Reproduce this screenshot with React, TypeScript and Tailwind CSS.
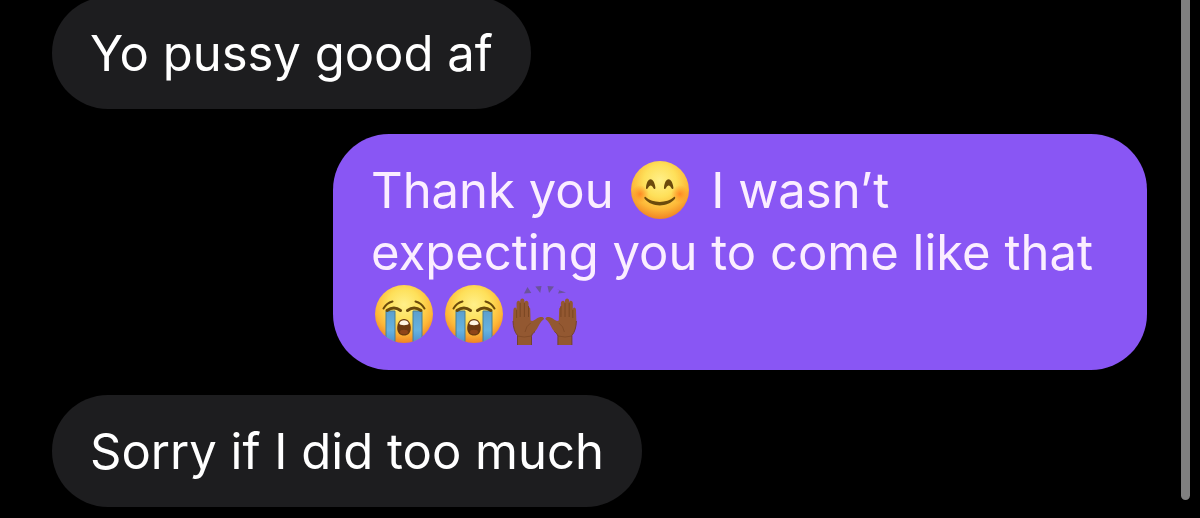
import type { ReactNode } from 'react'

const emojiClass = 'inline-block h-[62px] w-[70px] align-top'

function FaceGradient({ id }: { id: string }) {
  return (
    <defs>
      <radialGradient id={id} cx="50%" cy="34%" r="66%">
        <stop offset="0" stopColor="#fff08a" />
        <stop offset="0.42" stopColor="#fee05a" />
        <stop offset="0.75" stopColor="#fdb737" />
        <stop offset="1" stopColor="#f08423" />
      </radialGradient>
    </defs>
  )
}

function BlushEmoji() {
  return (
    <svg className={emojiClass} viewBox="0 1 70 62" role="img" aria-label="Smiling face with smiling eyes">
      <FaceGradient id="blush-face" />
      <defs>
        <radialGradient id="cheek">
          <stop offset="0" stopColor="#ff7a1c" stopOpacity="0.8" />
          <stop offset="1" stopColor="#ff8a1c" stopOpacity="0" />
        </radialGradient>
      </defs>
      <circle cx="33" cy="31" r="29" fill="url(#blush-face)" />
      <ellipse cx="13" cy="35" rx="9" ry="9" fill="url(#cheek)" />
      <ellipse cx="53" cy="35" rx="9" ry="9" fill="url(#cheek)" />
      <path d="M19 28.5C20 17.5 27 17.5 28.4 28.5C28.5 30.5 27 30.5 26.3 29C25 25.5 22.4 25.5 21 29C20.3 30.5 18.8 30.5 19 28.5Z" fill="#6b4a0c" />
      <path d="M37 28.5C38 17.5 45 17.5 46.4 28.5C46.5 30.5 45 30.5 44.3 29C43 25.5 40.4 25.5 39 29C38.3 30.5 36.8 30.5 37 28.5Z" fill="#6b4a0c" />
      <path d="M18.6 38C26 44.5 39.5 44.5 47 38C48.3 37.4 48.6 39 47.8 40C40.5 48.5 25 48.5 17.8 40C17 39 17.3 37.4 18.6 38Z" fill="#6b4a0c" />
    </svg>
  )
}

function CryEmoji({ id }: { id: string }) {
  return (
    <svg className={emojiClass} viewBox="0 1 70 62" role="img" aria-label="Loudly crying face">
      <FaceGradient id={id} />
      <defs>
        <linearGradient id={`${id}-tear`} x1="0" x2="0" y1="0" y2="1">
          <stop offset="0" stopColor="#5c9fce" />
          <stop offset="0.6" stopColor="#66b2e0" />
          <stop offset="1" stopColor="#4a8fd0" />
        </linearGradient>
        <clipPath id={`${id}-clip`}>
          <circle cx="33" cy="31" r="29" />
        </clipPath>
      </defs>
      <circle cx="33" cy="31" r="29" fill={`url(#${id})`} />
      <g clipPath={`url(#${id}-clip)`} stroke="#4b7f94" strokeWidth="1">
        <path d="M15 28H24V60H15Z" fill={`url(#${id}-tear)`} />
        <path d="M42 28H51V60H42Z" fill={`url(#${id}-tear)`} />
      </g>
      <g fill="none" stroke="#6b4a0c" strokeLinecap="round">
        <path d="M12.5 25.5Q15.5 20 21.5 18.5" strokeWidth="2" />
        <path d="M44.5 18.5Q50.5 20 53.5 25.5" strokeWidth="2" />
        <path d="M16 27.5Q23 22.5 29.5 27.5" strokeWidth="3" />
        <path d="M36.5 27.5Q43 22.5 50 27.5" strokeWidth="3" />
      </g>
      <path d="M33 36C37.5 36 39.8 40 39.8 45C39.8 50 37 52.5 33 52.5C29 52.5 26.2 50 26.2 45C26.2 40 28.5 36 33 36Z" fill="#6d3a10" />
      <path d="M28.3 40.5C29.5 36.3 36.5 36.3 37.7 40.5C38 42.8 28 42.8 28.3 40.5Z" fill="#fff6e2" />
      <ellipse cx="33" cy="49" rx="4" ry="2.2" fill="#8f4519" />
    </svg>
  )
}

function Hand() {
  return (
    <>
      <path
        d="M6.5 62V52.5C3.5 49 2.2 44 2 38L2.4 27C2.7 23.8 5.3 23.8 5.6 26.5V20C6 17 8.8 17 9.2 19.5V17.8C9.6 14.8 13 14.8 13.4 17.8V19.8C13.8 17 17 17 17.5 20V23.5L19.2 25.5L19.6 37.5C21.5 38.5 23 37.5 25 36C27.5 34.3 29.8 33.8 31.8 34.2C33.6 34.8 33.2 36.6 31.6 37.2C28.5 39.5 27.5 44.5 24 48.5C22.3 50 20.5 51.5 20.5 53.5V62Z"
        fill="#935831"
      />
      <path d="M5.6 27V35M9.2 20V34M13.4 20V34M17.5 23V34" fill="none" stroke="#74421f" strokeWidth="0.8" />
      <path d="M14 49Q15 43 19.6 40M6.5 53Q13 55 20.5 53" fill="none" stroke="#7d4825" strokeWidth="0.8" />
      <path d="M2 38C2.2 44 3.5 49 6.5 52.5V62M20.5 62V53.5C20.5 51.5 22.3 50 24 48.5" fill="none" stroke="#6f3f24" strokeWidth="0.9" />
    </>
  )
}

function RaisedHandsEmoji() {
  return (
    <svg className={emojiClass} viewBox="0 1 70 62" role="img" aria-label="Raising hands">
      <Hand />
      <g transform="matrix(-1 0 0 1 67.4 0)">
        <Hand />
      </g>
      <g fill="#6b539b">
        <path d="M13 10.5L16.5 4L20.3 10Z" />
        <path d="M24.3 3.5L30.5 3L29.2 10Z" />
        <path d="M36.5 3L43 3.5L38 10Z" />
        <path d="M47 10.5L48.5 7L46 6.5L55 9.5Z" />
      </g>
    </svg>
  )
}

function Bubble({ sent = false, children }: { sent?: boolean; children: ReactNode }) {
  return (
    <li
      className={
        sent
          ? 'max-w-[814px] self-end rounded-[56px] bg-[#8956f4] px-[38px] pt-[26px] pb-6 text-[#fbeeff]'
          : 'max-w-[814px] self-start rounded-[56px] bg-[#1d1d1f] px-[38px] pt-[26px] pb-6 text-white'
      }
    >
      {children}
    </li>
  )
}

export default function App() {
  return (
    <div className="flex min-h-screen overflow-hidden bg-black pr-[10px] font-['Inter',sans-serif] text-[49px] leading-[62px]">
      <main className="flex-1">
        <ul className="-mt-[3px] flex flex-col gap-[25px] pr-[34px] pb-[11px] pl-[52px]">
          <Bubble>Yo pussy good af</Bubble>
          <Bubble sent>
            Thank you <BlushEmoji /> I wasn’t expecting you to come like that <CryEmoji id="cry-1" />
            <CryEmoji id="cry-2" />
            <RaisedHandsEmoji />
          </Bubble>
          <Bubble>Sorry if I did too much</Bubble>
        </ul>
      </main>
      <div className="mb-[18px] w-[9px] rounded-b-full bg-[#7f7f7f]" />
    </div>
  )
}
